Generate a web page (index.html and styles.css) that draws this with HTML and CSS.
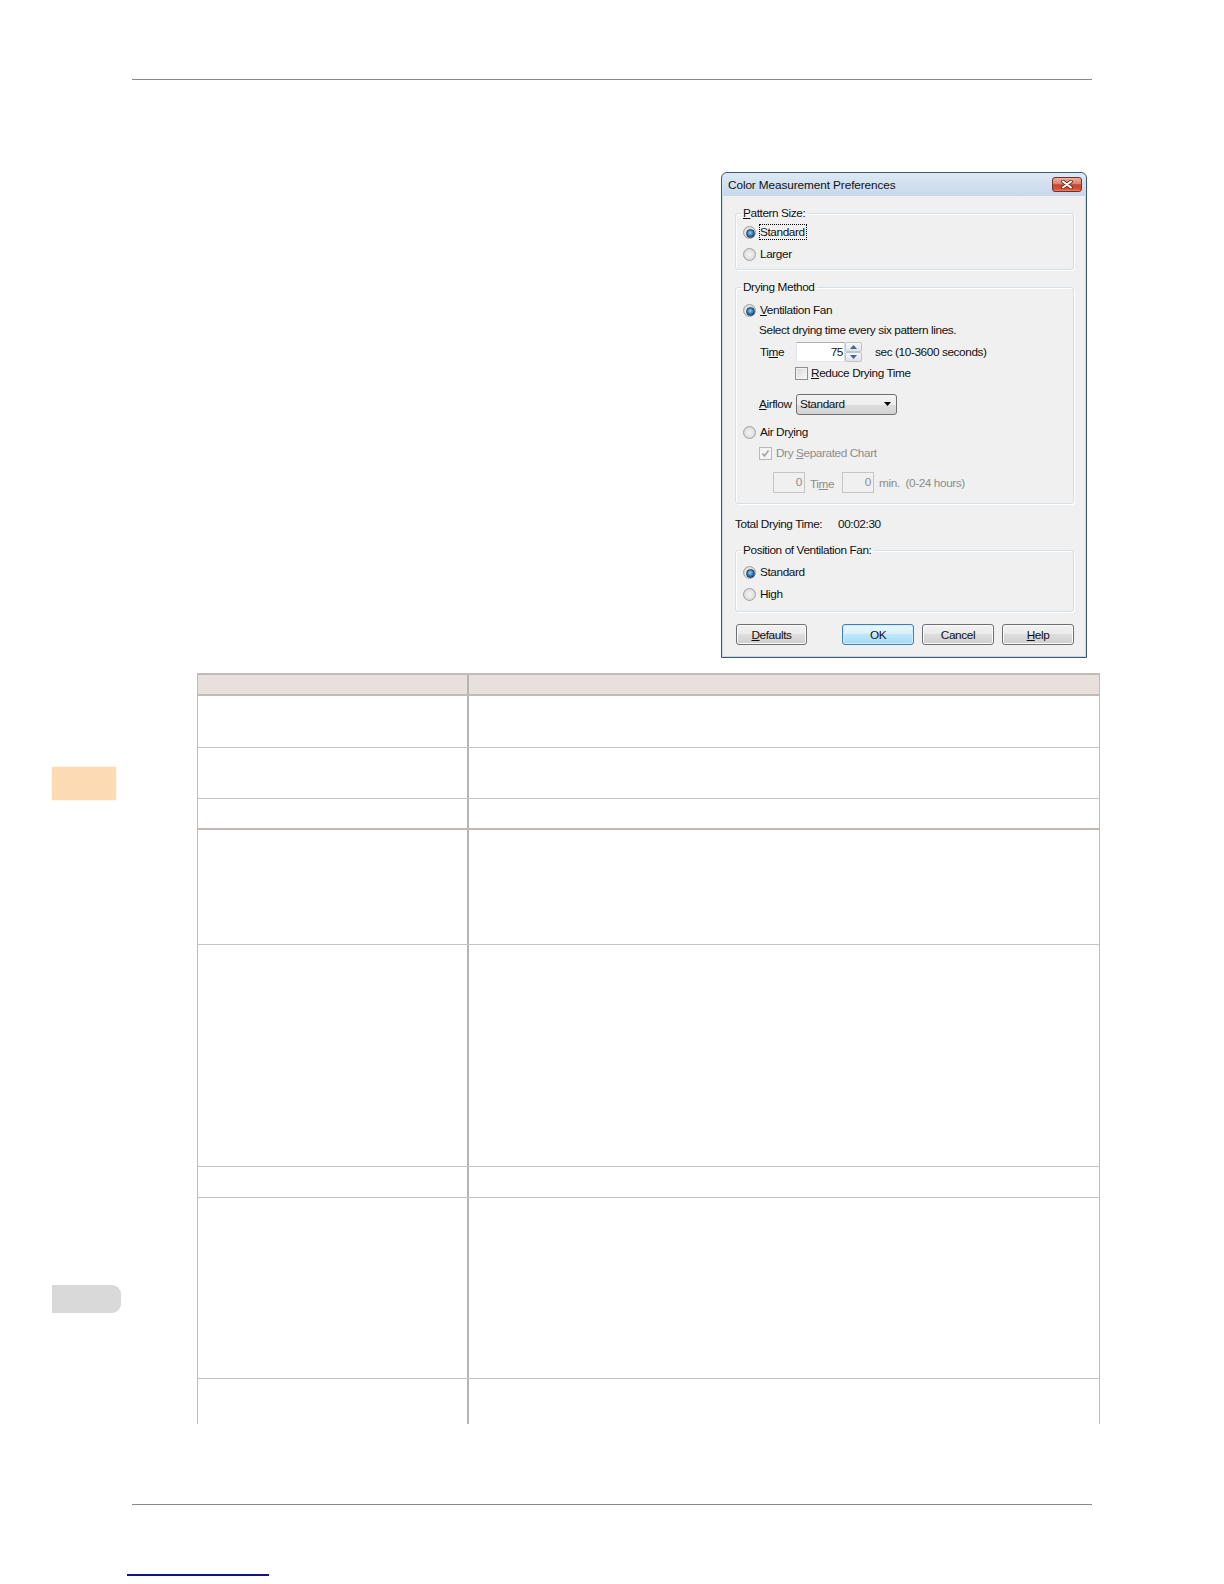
FILE: index.html
```html
<!DOCTYPE html>
<html lang="en">
<head>
    <meta charset="UTF-8">
    <title>Color Measurement Preferences</title>
    <link rel="stylesheet" href="styles.css">
</head>
<body>
<div class="page">
    <div class="rule-top"></div>

    <div class="sheet">
        <aside class="tabs">
            <div class="tab-current"></div>
            <div class="tab-next"></div>
        </aside>

        <main class="content">
            <!-- dialog screenshot -->
            <div class="dialog">
                <div class="titlebar">
                    <span class="title">Color Measurement Preferences</span>
                    <span class="close">
                        <svg width="12" height="9" viewBox="0 0 12 9">
                            <path d="M2 1.5 L10 7.5 M10 1.5 L2 7.5" stroke="#6b2418" stroke-width="3.6" stroke-linecap="round"/>
                            <path d="M2 1.5 L10 7.5 M10 1.5 L2 7.5" stroke="#fff" stroke-width="2" stroke-linecap="round"/>
                        </svg>
                    </span>
                </div>

                <div class="dlg-body">
                    <fieldset class="group group-size">
                        <legend><u>P</u>attern Size:</legend>
                        <div class="opt"><span class="radio on"></span><span class="focus">Standard</span></div>
                        <div class="opt"><span class="radio"></span><span>Larger</span></div>
                    </fieldset>

                    <fieldset class="group group-dry">
                        <legend>Drying Method</legend>
                        <div class="opt"><span class="radio on"></span><span><u>V</u>entilation Fan</span></div>
                        <div class="note">Select drying time every six pattern lines.</div>
                        <div class="time-row">
                            <span class="lbl">Ti<u>m</u>e</span>
                            <span class="field">75</span>
                            <span class="spin">
                                <span class="spin-btn">
                                    <svg width="7" height="4" viewBox="0 0 7 4"><path d="M0 4 L3.5 0 L7 4 Z" fill="#4a6488"/></svg>
                                </span>
                                <span class="spin-btn">
                                    <svg width="7" height="4" viewBox="0 0 7 4"><path d="M0 0 L7 0 L3.5 4 Z" fill="#4a6488"/></svg>
                                </span>
                            </span>
                            <span class="unit">sec (10-3600 seconds)</span>
                        </div>
                        <div class="check-row reduce"><span class="checkbox"></span><span><u>R</u>educe Drying Time</span></div>
                        <div class="airflow">
                            <span class="lbl-air"><u>A</u>irflow</span>
                            <span class="select">
                                <span>Standard</span>
                                <svg width="7" height="4" viewBox="0 0 7 4"><path d="M0 0 L7 0 L3.5 4 Z" fill="#000"/></svg>
                            </span>
                        </div>
                        <div class="opt air"><span class="radio"></span><span>Air Dr<u>y</u>ing</span></div>
                        <div class="check-row disabled">
                            <span class="checkbox off">
                                <svg width="11" height="11" viewBox="0 0 11 11"><path d="M2.5 5.5 L4.5 8 L8.5 2.5" stroke="#a3a3a3" stroke-width="1.6" fill="none"/></svg>
                            </span>
                            <span>Dry <u>S</u>eparated Chart</span>
                        </div>
                        <div class="range-row">
                            <span class="field off">0</span>
                            <span class="lbl-time">Ti<u>m</u>e</span>
                            <span class="field off">0</span>
                            <span class="unit-off">min.&nbsp; (0-24 hours)</span>
                        </div>
                    </fieldset>

                    <div class="total">
                        <span class="total-lbl">Total Drying Time:</span>
                        <span>00:02:30</span>
                    </div>

                    <fieldset class="group group-pos">
                        <legend>Position of Ventilation Fan:</legend>
                        <div class="opt"><span class="radio on"></span><span>Standard</span></div>
                        <div class="opt"><span class="radio"></span><span>High</span></div>
                    </fieldset>

                    <div class="buttons">
                        <span class="btn btn-defaults"><u>D</u>efaults</span>
                        <span class="btn btn-ok">OK</span>
                        <span class="btn">Cancel</span>
                        <span class="btn"><u>H</u>elp</span>
                    </div>
                </div>
            </div>

            <!-- settings table -->
            <div class="tbl">
                <div class="tr th"><div></div><div></div></div>
                <div class="tr r1"><div></div><div></div></div>
                <div class="tr r2"><div></div><div></div></div>
                <div class="tr r3 sep"><div></div><div></div></div>
                <div class="tr r4"><div></div><div></div></div>
                <div class="tr r5"><div></div><div></div></div>
                <div class="tr r6"><div></div><div></div></div>
                <div class="tr r7"><div></div><div></div></div>
                <div class="tr r8 last"><div></div><div></div></div>
            </div>
        </main>
    </div>

    <div class="rule-bottom"></div>
    <a class="foot-link" href="#"></a>
</div>
</body>
</html>
```

FILE: styles.css
```css
* { box-sizing: border-box; }
body { margin: 0; background: #fff; font-family: "Liberation Sans", Arial, sans-serif; color: #000; }
.page { width: 1224px; height: 1584px; overflow: hidden; }

.rule-top { width: 960px; height: 80px; margin-left: 132px; border-bottom: 1px solid #888; }
.rule-bottom { width: 960px; margin: 80px 0 0 132px; border-top: 1px solid #888; }
.foot-link { display: block; width: 142px; margin: 69px 0 0 127px; border-bottom: 2px solid #14148a; }

.sheet { display: grid; grid-template-columns: 132px 1fr; }
.tabs { display: flex; flex-direction: column; align-items: flex-start; padding-left: 52px; }
.tab-current { margin-top: 687px; width: 64px; height: 33px; background: #fcdab3; box-shadow: 0 0 2px #fde6cb; }
.tab-next { margin-top: 485px; width: 69px; height: 28px; background: #d9d9d9; border-radius: 0 9px 9px 0; }

.content { display: flex; flex-direction: column; align-items: flex-start; }

/* dialog */
.dialog { margin: 92px 0 0 589px; width: 366px; border: 1px solid #3b5b70; border-radius: 6px 6px 0 0; padding: 0 1px 1px; background: linear-gradient(#dde9f5, #c6d8eb 23px, #c6d8eb); font-size: 11.8px; letter-spacing: -0.4px; color: #111; }
.titlebar { height: 23px; display: flex; align-items: center; justify-content: space-between; padding: 0 3px 0 5px; }
.title { font-size: 11.8px; letter-spacing: -0.1px; }
.close { width: 30px; height: 15px; border: 1px solid #7a2d22; border-radius: 3px; background: linear-gradient(#eab0a2, #d9806b 45%, #c6442c 52%, #cf5537 85%, #e3866a); display: flex; align-items: center; justify-content: center; }

.dlg-body { background: #f0f0f0; padding: 10px 11px 11px 12px; }

.group { margin: 0; padding: 1px 6px 4px 7px; border: 1px solid #d5dfe5; border-radius: 3px; box-shadow: inset 1px 1px 0 #fff, 1px 1px 0 #fff; min-width: 0; }
.group legend { padding: 0 2px; margin-left: -2px; height: 14px; line-height: 14px; }
.group-dry { margin-top: 10px; padding-top: 5px; padding-bottom: 10px; }
.group-pos { margin-top: 10px; padding-top: 4px; padding-bottom: 6px; }

.opt { display: flex; align-items: center; height: 22px; gap: 4px; }
.opt.air { margin-top: 7px; }
.focus { outline: 1px dotted #000; outline-offset: 0; padding: 0 1px 0 0; }

.radio { position: relative; flex: none; width: 13px; height: 13px; border-radius: 50%; border: 1px solid #a0a0a0; background: radial-gradient(circle at 50% 50%, #f4f4f4 0, #e2e2e2 55%, #c8c8c8 100%); }
.radio.on::after { content: ""; position: absolute; left: 2px; top: 2px; width: 7px; height: 7px; border-radius: 50%; border: 1px solid #1b3f63; background: radial-gradient(circle at 45% 40%, #8fd0f2, #2c72ad 55%, #0e3a63); }

.checkbox { flex: none; width: 13px; height: 13px; border: 1px solid #8e8f8f; background: linear-gradient(135deg, #d6d6d6, #fbfbfb); box-shadow: inset 0 0 0 1px #f3f3f3; display: flex; align-items: center; justify-content: center; }
.checkbox.off { border-color: #b9b9b9; background: #f4f4f4; }

.note { height: 18px; line-height: 18px; margin-left: 16px; }
.time-row { display: flex; align-items: center; height: 20px; margin: 3px 0 0 17px; }
.time-row .lbl { width: 36px; }
.field { display: block; width: 49px; height: 20px; line-height: 18px; border: 1px solid #abadb3; border-color: #abadb3 #dbdfe6 #e3e9ef #e2e3ea; background: #fff; text-align: right; padding-right: 1px; }
.spin { display: flex; flex-direction: column; width: 17px; height: 20px; }
.spin-btn { flex: 1; display: flex; align-items: center; justify-content: center; border: 1px solid #c2c4c8; border-radius: 2px; background: linear-gradient(#f6f8fa, #dfe3e8); }
.unit { margin-left: 13px; }

.check-row { display: flex; align-items: center; height: 18px; gap: 3px; }
.check-row.reduce { margin: 2px 0 0 52px; }
.check-row.disabled { margin: 1px 0 0 16px; gap: 4px; color: #8d8d8d; }

.airflow { display: flex; align-items: center; height: 20px; margin: 12px 0 0 16px; }
.lbl-air { width: 37px; }
.select { display: flex; align-items: center; justify-content: space-between; width: 101px; height: 21px; padding: 0 5px 0 3px; border: 1px solid #707070; border-radius: 3px; background: linear-gradient(#f4f4f4, #ececec 50%, #dedede 52%, #d2d2d2); }

.range-row { display: flex; align-items: center; height: 21px; margin: 10px 0 0 30px; color: #8d8d8d; }
.field.off { width: 32px; height: 21px; line-height: 19px; background: #f0f0f0; border: 1px solid #c5c5c5; color: #8d8d8d; padding-right: 2px; }
.lbl-time { width: 32px; margin-left: 5px; padding-top: 3px; }
.unit-off { margin-left: 5px; }

.total { display: flex; height: 18px; line-height: 18px; margin-top: 11px; }
.total-lbl { width: 103px; }

.buttons { display: flex; gap: 8px; margin-top: 12px; padding-left: 1px; }
.btn { display: flex; align-items: center; justify-content: center; width: 72px; height: 21px; border: 1px solid #707070; border-radius: 3px; background: linear-gradient(#f2f2f2, #ebebeb 45%, #dddddd 50%, #cfcfcf); box-shadow: inset 0 0 0 1px #fbfbfb; }
.btn-defaults { width: 71px; margin-right: auto; }
.btn-ok { border-color: #3c7fb1; background: linear-gradient(#eaf6fd, #d9f0fc 45%, #bee6fd 50%, #a7d9f5); box-shadow: inset 0 0 0 1px #d2ecfb; }

/* table */
.tbl { margin: 15px 0 0 65px; width: 903px; border-left: 1px solid #bdbdbd; border-right: 1px solid #bdbdbd; }
.tr { display: flex; border-bottom: 1px solid #c4c4c4; }
.tr > div:first-child { width: 271px; border-right: 2px solid #b9b3af; }
.th { height: 23px; background: #e8e0dc; border-top: 2px solid #c2bab6; border-bottom: 2px solid #c2bab6; }
.r1 { height: 52px; }
.r2 { height: 51px; }
.r3 { height: 31px; }
.tr.sep { border-bottom: 2px solid #c6b8b4; }
.r4 { height: 115px; }
.r5 { height: 222px; }
.r6 { height: 31px; }
.r7 { height: 181px; }
.r8 { height: 45px; }
.tr.last { border-bottom: none; }
```
